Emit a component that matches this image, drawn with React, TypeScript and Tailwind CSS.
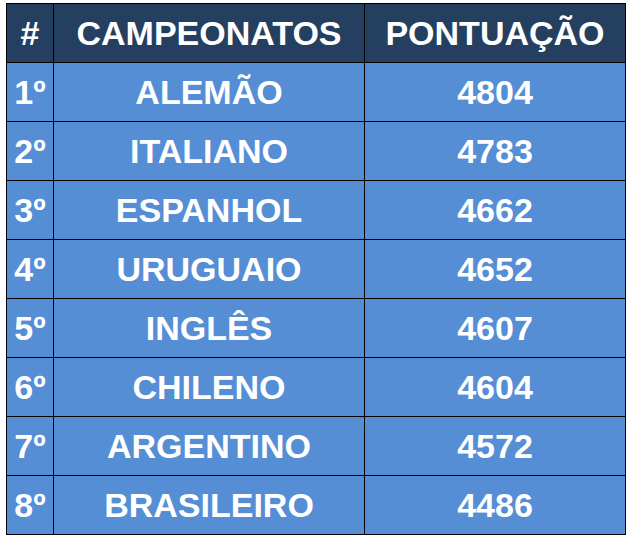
import React from 'react';

const ROWS: { pos: string; name: string; pts: number }[] = [
    { pos: '1º', name: 'ALEMÃO', pts: 4804 },
    { pos: '2º', name: 'ITALIANO', pts: 4783 },
    { pos: '3º', name: 'ESPANHOL', pts: 4662 },
    { pos: '4º', name: 'URUGUAIO', pts: 4652 },
    { pos: '5º', name: 'INGLÊS', pts: 4607 },
    { pos: '6º', name: 'CHILENO', pts: 4604 },
    { pos: '7º', name: 'ARGENTINO', pts: 4572 },
    { pos: '8º', name: 'BRASILEIRO', pts: 4486 },
];

const App: React.FC = () => {
    const cell = 'h-[58px] flex items-center justify-center';

    return (
        <div className="w-[634px] h-[541px] bg-white pt-[3px] pl-[6px]">
            <div
                className="w-[620px] grid grid-cols-[46px_310px_260px] gap-px bg-black p-px text-white font-bold text-[34px] leading-none"
                style={{ fontFamily: '"Liberation Sans", Arial, sans-serif' }}
            >
                {/* Header */}
                <div className={`${cell} bg-[#243f60]`}>#</div>
                <div className={`${cell} bg-[#243f60]`}>CAMPEONATOS</div>
                <div className={`${cell} bg-[#243f60]`}>PONTUAÇÃO</div>

                {/* Rows */}
                {ROWS.map(row => (
                    <React.Fragment key={row.pos}>
                        <div className={`${cell} bg-[#558ed5]`}>{row.pos}</div>
                        <div className={`${cell} bg-[#558ed5]`}>{row.name}</div>
                        <div className={`${cell} bg-[#558ed5]`}>{row.pts}</div>
                    </React.Fragment>
                ))}
            </div>
        </div>
    );
};

export default App;
